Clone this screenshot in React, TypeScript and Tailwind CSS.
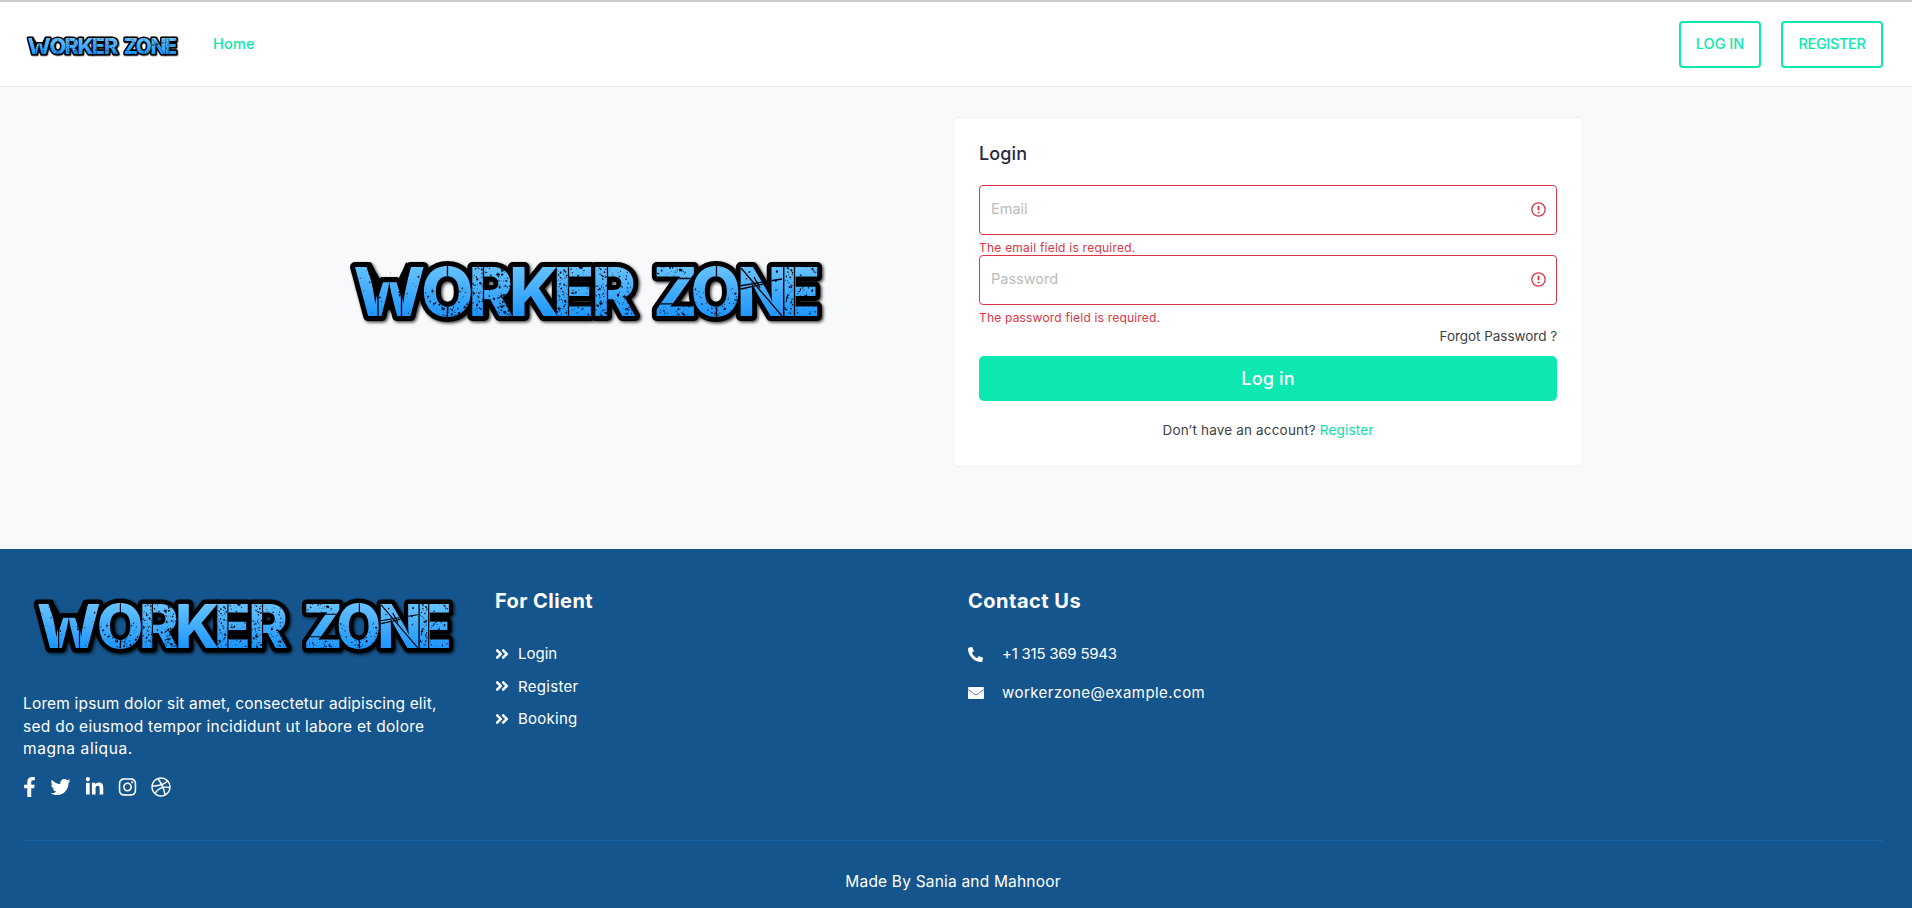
import { useId } from "react";
import type { ReactNode } from "react";
import {
  FaAngleDoubleRight,
  FaDribbble,
  FaFacebookF,
  FaInstagram,
  FaLinkedinIn,
  FaPhoneAlt,
  FaTwitter,
} from "react-icons/fa";

type Speck = { x: number; y: number; rx: number; ry: number; a: number };

// Worn areas of the lettering: [x, y, width, height, number of specks]
const wornAreas: [number, number, number, number, number][] = [
  [26, 27, 68, 49, 45],
  [94, 48, 48, 28, 70],
  [112, 64, 14, 12, 25],
  [143, 27, 10, 49, 60],
  [155, 27, 27, 49, 60],
  [166, 28, 16, 20, 35],
  [168, 54, 14, 22, 60],
  [227, 27, 10, 49, 85],
  [240, 27, 24, 49, 75],
  [265, 27, 12, 49, 70],
  [279, 27, 28, 49, 55],
  [292, 54, 16, 22, 70],
  [326, 27, 34, 11, 28],
  [326, 65, 34, 11, 38],
  [363, 48, 48, 28, 65],
  [381, 64, 14, 12, 20],
  [412, 27, 38, 25, 18],
  [453, 27, 10, 49, 75],
  [466, 27, 24, 49, 80],
];

function makeSpecks(): Speck[] {
  let seed = 7;
  const next = () => {
    seed = (seed * 16807) % 2147483647;
    return seed / 2147483647;
  };
  return wornAreas.flatMap(([x, y, w, h, n]) =>
    Array.from({ length: n }, () => {
      const r = 0.25 + next() * next() * 1.1;
      return {
        x: x + next() * w,
        y: y + next() * h,
        rx: r,
        ry: r * (0.6 + next()),
        a: Math.round(next() * 180),
      };
    }),
  );
}

const specks = makeSpecks();

const wordRuns = [
  { text: "WORKER", x: "23.5 91.2 138.5 179 223 261.5", transform: undefined },
  { text: "ZONE", x: "336.7 375.9 423.9 469.5", transform: "scale(0.96 1)" },
];

function Letters() {
  return (
    <>
      {wordRuns.map((run) => (
        <text key={run.text} y="76" x={run.x} transform={run.transform}>
          {run.text}
        </text>
      ))}
    </>
  );
}

function Logo({ className }: { className: string }) {
  const id = useId().replace(/[^a-zA-Z0-9]/g, "");
  return (
    <svg
      viewBox="0 0 520 100"
      className={className}
      role="img"
      fontFamily="Inter, sans-serif"
      fontWeight="800"
      fontSize="67.6"
    >
      <defs>
        <linearGradient id={`g${id}`} gradientUnits="userSpaceOnUse" x1="0" y1="27" x2="0" y2="76">
          <stop offset="0" stopColor="#66c2ff" />
          <stop offset="1" stopColor="#1e96ff" />
        </linearGradient>
        <clipPath id={`c${id}`}>
          {wordRuns.map((run) => (
            <text key={run.text} y="76" x={run.x} transform={run.transform}>
              {run.text}
            </text>
          ))}
        </clipPath>
        <clipPath id={`o${id}`}>
          <path clipRule="evenodd" d="M0 0H520V100H0ZM39 8L41 22L49.500 38.500L51.500 37.300H67L69 38L76 22L78 8Z" />
        </clipPath>
        <clipPath id={`f${id}`}>
          <path clipRule="evenodd" d="M0 0H520V100H0ZM36.500 8V27L47.800 59L53 42.300H66.500L71.500 58L81 27V8Z" />
        </clipPath>
        <filter id={`s${id}`} x="-5%" y="-20%" width="110%" height="140%">
          <feDropShadow dx="1.5" dy="1.5" stdDeviation="1.6" floodColor="#000" floodOpacity="0.75" />
        </filter>
      </defs>
      <g filter={`url(#s${id})`}>
        <g clipPath={`url(#o${id})`} stroke="#000" strokeWidth="10" strokeLinejoin="round" fill="#000">
          <path stroke="none" d="M36 27L41 22L49.500 38.500L51.500 37.300H67L69 38L76 22L81 27L71 70H48Z" />
          <Letters />
        </g>
      </g>
      <g clipPath={`url(#f${id})`} fill={`url(#g${id})`}>
        <Letters />
      </g>
      <g clipPath={`url(#c${id})`}>
        <g stroke="#000" strokeWidth="1.3" fill="none">
          <path d="M48 50V77M71.500 50V77M117.5 26V38M117.5 64V77M153.5 26V77M238.5 26V77M277.5 26V77M386.5 26V38M386.5 64V77M464.500 26V77" />
          <path d="M325 38.500H361M325 63.800H361M411 28L452 76M409 46L452 39M411 49L438 43M424 37L430 48" />
        </g>
        {specks.map((s, i) => (
          <ellipse
            key={i}
            cx={s.x}
            cy={s.y}
            rx={s.rx}
            ry={s.ry}
            transform={`rotate(${s.a} ${s.x} ${s.y})`}
            fill="#04101c"
          />
        ))}
      </g>
    </svg>
  );
}

function AlertMark() {
  return (
    <svg viewBox="0 0 16 16" className="size-[15px] shrink-0" fill="none" stroke="#dc3545">
      <circle cx="8" cy="8" r="7.100" strokeWidth="1.400" />
      <path d="M8 4V8.800" strokeWidth="1.900" />
      <circle cx="8" cy="11.300" r="0.650" fill="#dc3545" strokeWidth="0.700" />
    </svg>
  );
}

function Field({ label, error }: { label: ReactNode; error: ReactNode }) {
  return (
    <div className="h-[70px]">
      <div className="flex h-[50px] items-center justify-between rounded-[4px] border border-[#dc3545] pr-[10px] pb-[2px] pl-[11px] text-[#bbb]">
        {label}
        <AlertMark />
      </div>
      <div className="pt-1 text-[12px] leading-[18px] text-[#dc3545]">{error}</div>
    </div>
  );
}

function QuickLink({ children }: { children: ReactNode }) {
  return (
    <li className="flex h-[23px] items-center">
      <FaAngleDoubleRight className="mr-[8px] mb-[2px] -ml-px size-4" />
      {children}
    </li>
  );
}

export default function App() {
  return (
    <div className="flex h-[908px] flex-col overflow-hidden bg-[#f8f9fb] font-['Inter',sans-serif] text-[15px]">
      <header className="flex h-[87px] shrink-0 items-center border-t-2 border-b border-t-[#ccc] border-b-[#e9ecef] bg-white pr-[29px] pl-[20px] font-medium text-[#0ce8af]">
        <Logo className="mt-[3px] h-8 w-[167px]" />
        <a className="ml-[26px] text-[14.5px] leading-[22px] tracking-[0.2px]">Home</a>
        <div className="ml-auto flex gap-5">
          <a className="flex h-[47px] w-[82px] items-center justify-center rounded-[4px] border-2 border-[#0ce8af] text-[14.5px]">
            <span>LOG IN</span>
          </a>
          <a className="flex h-[47px] w-[102px] items-center justify-center rounded-[4px] border-2 border-[#0ce8af] text-[14.5px]">
            <span className="tracking-[-0.35px]">REGISTER</span>
          </a>
        </div>
      </header>

      <main className="flex h-[462px] shrink-0 items-start pt-[30px] pl-[330px]">
        <Logo className="mt-[123px] h-[100px] w-[520px]" />
        <section className="ml-[103px] flex h-[350px] w-[630px] flex-col rounded-[4px] border border-[#f0f0f0] bg-white px-[25px] pt-[22px]">
          <h1 className="mb-[18px] text-[18px] leading-[27px] font-medium text-[#272b41]">
            <span className="tracking-[0.1px]">Login</span>
          </h1>
          <Field
            label={<span className="text-[14.5px]">Email</span>}
            error={<span className="tracking-[0.23px]">The email field is required.</span>}
          />
          <Field
            label={<span className="text-[14.5px]">Password</span>}
            error={<span className="tracking-[0.19px]">The password field is required.</span>}
          />
          <a className="text-right text-[13.5px] leading-[23px] tracking-[-0.04px] text-[#3d3f45]">
            Forgot Password ?
          </a>
          <button className="mt-2 h-[45px] shrink-0 rounded-[5px] bg-[#0ce8af] text-[18px] font-medium tracking-[0.15px] text-white">
            Log in
          </button>
          <p className="mt-[19px] text-center text-[13.5px] leading-5 tracking-[0.17px] text-[#3d3f45]">
            Don’t have an account? <a className="text-[#0de0a8]">Register</a>
          </p>
        </section>
      </main>

      <footer className="flex h-[359px] shrink-0 flex-col bg-[#15558d] pr-[29px] pl-[23px] text-white">
        <div className="flex h-[292px] border-b border-[#1663a6]">
          <div className="w-[472px] pt-[31px]">
            <Logo className="-ml-[7px] h-[89px] w-[462px]" />
            <p className="mt-[24px] text-[15.5px] leading-[22.5px] whitespace-nowrap">
              <span className="tracking-[0.16px]">Lorem ipsum dolor sit amet, consectetur adipiscing elit,</span>
              <br />
              <span className="tracking-[0.27px]">sed do eiusmod tempor incididunt ut labore et dolore</span>
              <br />
              <span className="tracking-[0.6px]">magna aliqua.</span>
            </p>
            <div className="mt-[16px] flex items-center gap-[14px] text-[20px]">
              <FaFacebookF className="w-[13px]" />
              <FaTwitter className="w-[21px]" />
              <FaLinkedinIn className="w-[19px]" />
              <FaInstagram className="w-[19px]" />
              <FaDribbble className="w-[20px]" />
            </div>
          </div>
          <div className="w-[473px] pt-[37px]">
            <h2 className="text-[20px] leading-[30px] font-bold tracking-[0.45px]">For Client</h2>
            <ul className="mt-[27px] flex flex-col gap-[9.500px]">
              <QuickLink>Login</QuickLink>
              <QuickLink>
                <span className="tracking-[0.3px]">Register</span>
              </QuickLink>
              <QuickLink>
                <span className="tracking-[0.25px]">Booking</span>
              </QuickLink>
            </ul>
          </div>
          <div className="pt-[37px]">
            <h2 className="text-[20px] leading-[30px] font-bold tracking-[0.5px]">Contact Us</h2>
            <div className="mt-[27px] flex h-[23px] items-center tracking-[-0.24px]">
              <FaPhoneAlt className="mr-[19px] mb-px size-[15px]" />
              +1 315 369 5943
            </div>
            <div className="mt-4 flex h-[23px] items-center tracking-[0.46px]">
              <svg viewBox="0 0 16 12" className="mr-[18px] mb-[2px] h-3 w-4" fill="none">
                <rect width="16" height="12" rx="1.200" fill="#fff" />
                <path d="M0 2.400L6.500 7.200Q8 8.200 9.500 7.200L16 2.400" stroke="#15558d" strokeWidth="0.700" />
              </svg>
              workerzone@example.com
            </div>
          </div>
        </div>
        <p className="mt-[29px] text-center text-[15.5px] leading-[23px] tracking-[0.19px]">
          Made By Sania and Mahnoor
        </p>
      </footer>
    </div>
  );
}
